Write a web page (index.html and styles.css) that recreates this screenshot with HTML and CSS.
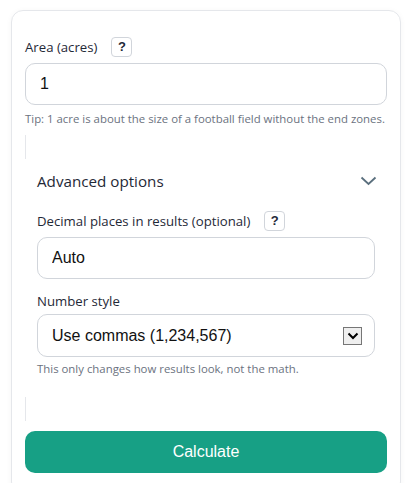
FILE: index.html
```html
<!DOCTYPE html>
<html lang="en">
<head>
<meta charset="utf-8">
<title>Acres calculator</title>
<link rel="stylesheet" href="styles.css">
</head>
<body>
<div class="card">
  <div class="label-row">
    <label class="label" for="area">Area (acres)</label>
    <button class="help" type="button">?</button>
  </div>
  <input id="area" class="field" type="text" value="1">
  <p class="hint">Tip: 1 acre is about the size of a football field without the end zones.</p>
  <div class="result-line"></div>
  <div class="details">
    <div class="summary">
      <span>Advanced options</span>
      <svg class="chev" width="17" height="10" viewBox="0 0 17 10"><path d="M1.5 1.5 L8.5 8 L15.5 1.5" fill="none" stroke="#5a6f7d" stroke-width="1.8"/></svg>
    </div>
    <div class="details-body">
      <div class="label-row">
        <label class="label" for="dec">Decimal places in results (optional)</label>
        <button class="help" type="button">?</button>
      </div>
      <input id="dec" class="field" type="text" value="Auto">
      <label class="label solo" for="style">Number style</label>
      <div class="select">
        <span>Use commas (1,234,567)</span>
        <span class="sel-arrow"><svg width="12" height="8" viewBox="0 0 12 8"><path d="M1.5 1.5 L6 6 L10.5 1.5" fill="none" stroke="#000" stroke-width="2"/></svg></span>
      </div>
      <p class="hint">This only changes how results look, not the math.</p>
    </div>
  </div>
  <div class="result-line second"></div>
  <button class="calc" type="button">Calculate</button>
</div>
</body>
</html>
```

FILE: styles.css
```css
* { box-sizing: border-box; }
html, body { margin: 0; background: #fff; }
body { font-family: "Open Sans", "Liberation Sans", sans-serif; color: #1f2937; }
.card {
  margin: 10px 10px 0 11px;
  border: 1px solid #e5e7eb;
  border-radius: 12px;
  padding: 26px 13px 20px 13px;
  box-shadow: 0 1px 6px rgba(0,0,0,0.04);
}
.label-row { display: flex; align-items: center; gap: 14px; height: 19px; margin-bottom: 7px; }
.label { font-size: 13.2px; color: #1f2937; }
.help {
  width: 21px; height: 20px; padding: 0;
  border: 1px solid #d1d5db; border-radius: 4px; background: #fff;
  font-family: "Liberation Sans", sans-serif; font-weight: bold; font-size: 13px; color: #1f2937;
  display: flex; align-items: center; justify-content: center;
}
.field {
  display: block; width: 100%; height: 42px;
  border: 1px solid #d1d5db; border-radius: 10px;
  padding: 0 14px; font-family: "Liberation Sans", sans-serif; font-size: 16px; color: #111;
  background: #fff; outline: none;
}
.hint { margin: 6px 0 0; font-size: 11.4px; color: #6b7280; }
.result-line { width: 1px; height: 24px; background: #e5e7eb; margin-top: 9px; }
.details { padding: 0 12px; }
.summary { display: flex; justify-content: space-between; align-items: center; height: 43px; margin-bottom: 9px; font-size: 15.2px; color: #1f2937; }
.chev { margin-right: -2px; }
.solo { display: block; margin-top: 13px; margin-bottom: 4px; }
.select {
  display: flex; align-items: center; justify-content: space-between;
  height: 43px; border: 1px solid #d1d5db; border-radius: 10px;
  padding: 0 12px 0 14px; font-family: "Liberation Sans", sans-serif; font-size: 16px; color: #111;
}
.sel-arrow {
  width: 19px; height: 18px; border: 1px solid #767676; background: #efefef;
  display: flex; align-items: center; justify-content: center;
}
.details-body .hint { margin-top: 4px; }
.result-line.second { margin-top: 21px; }
.calc {
  display: block; width: 100%; height: 42px; margin-top: 10px;
  border: 0; border-radius: 10px; background: #17a085; color: #fff;
  font-family: "Liberation Sans", sans-serif; font-size: 16px;
}
```
